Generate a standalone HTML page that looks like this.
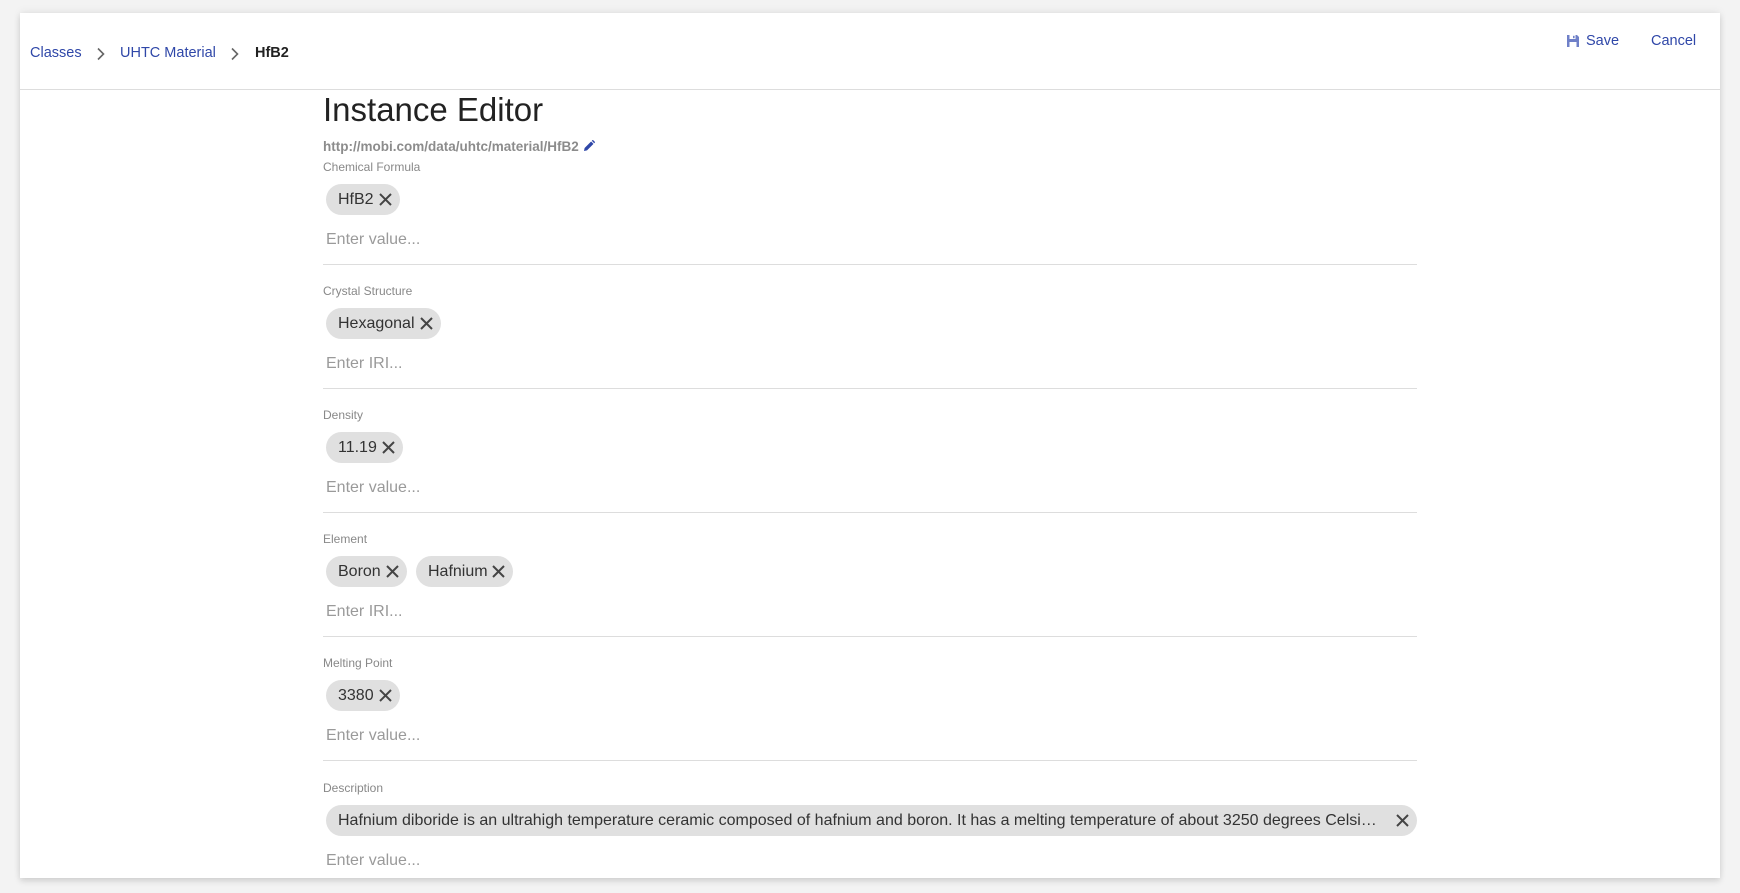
<!DOCTYPE html>
<html><head><meta charset="utf-8">
<style>
*{margin:0;padding:0;box-sizing:border-box}
html,body{width:1740px;height:893px;overflow:hidden;background:#f3f3f3;font-family:"Liberation Sans",Arial,sans-serif}
.card{position:absolute;left:20px;top:13px;width:1700px;height:865px;background:#fff;box-shadow:0 3px 6px rgba(0,0,0,.14),0 -2px 8px rgba(0,0,0,.05)}
.hdr{position:absolute;left:0;top:0;width:1700px;height:77px;border-bottom:1px solid #ddd}
.a{position:absolute;font-size:14.5px;color:#2f47a8;line-height:18px;white-space:nowrap}
.chev{position:absolute;top:34px}
.title{position:absolute;left:303px;top:78px;font-size:33px;color:#222;line-height:38px;white-space:nowrap}
.iri{position:absolute;left:303px;top:126px;font-size:13.5px;font-weight:bold;color:#8c8c8c;line-height:16px;white-space:nowrap}
.lbl{position:absolute;left:303px;font-size:12px;color:#888;line-height:14px;white-space:nowrap}
.chip{position:absolute;height:31px;background:#e0e0e0;border-radius:16px;font-size:16px;color:#333;line-height:31px;padding-left:12px;padding-right:26px;white-space:nowrap}
.chip svg{position:absolute;right:7px;top:8px}
.ph{position:absolute;left:306px;font-size:16px;color:#9a9a9a;line-height:20px;white-space:nowrap}
.line{position:absolute;left:303px;width:1094px;height:1px;background:#ddd}
#f{position:absolute;left:20px;top:13px;width:1700px;height:865px}
</style></head><body>
<div class="card">
 <div class="hdr">
  <span class="a" style="left:10px;top:31px">Classes</span>
  <svg class="chev" style="left:76px" width="10" height="14" viewBox="0 0 10 14"><path d="M2 1.5l5.5 5.5L2 12.5" fill="none" stroke="#666" stroke-width="1.6"/></svg>
  <span class="a" style="left:100px;top:31px">UHTC Material</span>
  <svg class="chev" style="left:210px" width="10" height="14" viewBox="0 0 10 14"><path d="M2 1.5l5.5 5.5L2 12.5" fill="none" stroke="#666" stroke-width="1.6"/></svg>
  <span class="a" style="left:235px;top:31px;color:#222;font-weight:bold">HfB2</span>
  <svg style="position:absolute;left:1546px;top:21px" width="14" height="14" viewBox="0 0 14 14"><path d="M1 1h10l2 2v10H1z" fill="#6f80c8"/><rect x="3.5" y="1" width="6" height="4" fill="#fff"/><rect x="7" y="1.8" width="1.6" height="2.4" fill="#6f80c8"/><rect x="3.5" y="8" width="7" height="5" fill="#fff"/></svg>
  <span class="a" style="left:1566px;top:19px">Save</span>
  <span class="a" style="left:1631px;top:19px">Cancel</span>
 </div>
 <div class="title">Instance Editor</div>
 <div class="iri">http://mobi.com/data/uhtc/material/HfB2 <svg width="12" height="12" viewBox="0 0 12 12" style="vertical-align:-1px"><path d="M1 11l.6-3 6.5-6.5 2.4 2.4L4 10.4z M8.8.8l1-1 2.4 2.4-1 1z" fill="#2f47a8"/></svg></div>
</div>
<div id="f"></div>
<script>
var S=[["Chemical Formula",[["HfB2",74]],"Enter value..."],["Crystal Structure",[["Hexagonal",115]],"Enter IRI..."],["Density",[["11.19",77]],"Enter value..."],["Element",[["Boron",81],["Hafnium",97]],"Enter IRI..."],["Melting Point",[["3380",74]],"Enter value..."],["Description",[["Hafnium diboride is an ultrahigh temperature ceramic composed of hafnium and boron. It has a melting temperature of about 3250 degrees Celsi…",1091]],"Enter value..."]];
var h="",x='<svg width="15" height="15" viewBox="0 0 15 15"><path d="M2 2l11 11M13 2L2 13" stroke="#444" stroke-width="2"/></svg>';
S.forEach(function(s,i){var t=Math.round(154+124.1*i);
h+='<div class="lbl" style="top:'+(t-7)+'px">'+s[0]+'</div>';
var l=306;s[1].forEach(function(c){var w=c[1];h+='<div class="chip" style="left:'+l+'px;top:'+(t+17)+'px;width:'+w+'px;'+(w>500?'overflow:hidden;text-overflow:ellipsis;padding-right:34px':'')+'">'+c[0]+x+'</div>';l+=w+9;});
h+='<div class="ph" style="top:'+(t+63)+'px">'+s[2]+'</div>';
if(i<5)h+='<div class="line" style="top:'+(t+97)+'px"></div>';});
document.getElementById('f').innerHTML=h;
</script>
</body></html>
